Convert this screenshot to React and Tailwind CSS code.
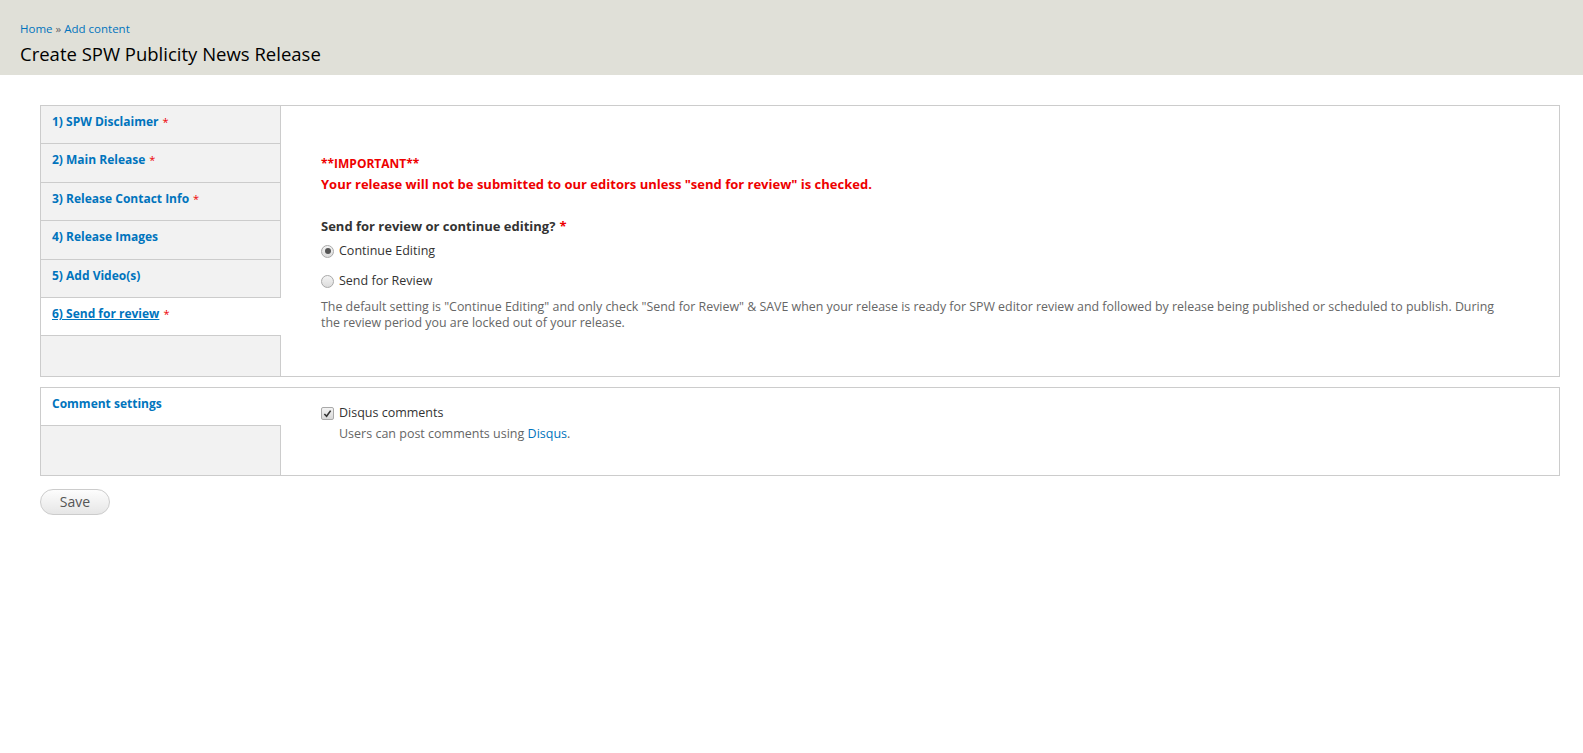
import React from "react";

const font = { fontFamily: "'Open Sans', 'Noto Sans', 'DejaVu Sans', sans-serif" };

function Star() {
  return <span className="text-[#e00] text-[11px] font-normal ml-[4px]">*</span>;
}

function Tab({ label, req, active, h }) {
  return (
    <li
      className={
        "flex items-start pl-[11px] pt-[7px] text-[12px] leading-[18px] border-b border-[#ccc] " +
        h +
        (active ? " bg-white mr-[-1px] relative z-10" : " bg-[#f2f2f2]")
      }
    >
      <a
        href="#"
        className={"font-bold text-[#0074bd] " + (active ? "underline" : "no-underline")}
      >
        {label}
      </a>
      {req && <Star />}
    </li>
  );
}

function Radio({ checked, label }) {
  return (
    <div className="flex items-center h-[18px]">
      <span className="w-[13px] h-[13px] rounded-full border border-[#a9a9a9] bg-gradient-to-b from-[#f4f4f4] to-[#dcdcdc] flex items-center justify-center">
        {checked && <span className="w-[6px] h-[6px] rounded-full bg-[#555]" />}
      </span>
      <span className="ml-[5px] text-[12.5px] text-[#333]">{label}</span>
    </div>
  );
}

export default function App() {
  return (
    <div style={font} className="bg-white min-h-[753px] text-[#333]">
      <div className="h-[75px] bg-[#e0e0d8] pl-[20px] pt-[21px]">
        <div className="text-[11.5px] leading-[16px] text-[#0074bd]">
          <a href="#">Home</a> <span className="text-[#666]">»</span> <a href="#">Add content</a>
        </div>
        <h1 className="text-[18.5px] leading-[26px] mt-[4px] text-black font-normal">
          Create SPW Publicity News Release
        </h1>
      </div>

      <div className="pl-[40px] pr-[23px] pt-[30px]">
        <div className="border border-[#ccc] flex h-[272px]">
          <ul className="w-[240px] shrink-0 border-r border-[#ccc] bg-[#f2f2f2] list-none m-0 p-0">
            <Tab h="h-[38px]" label="1) SPW Disclaimer" req />
            <Tab h="h-[39px]" label="2) Main Release" req />
            <Tab h="h-[38px]" label="3) Release Contact Info" req />
            <Tab h="h-[39px]" label="4) Release Images" />
            <Tab h="h-[38px]" label="5) Add Video(s)" />
            <Tab h="h-[38px]" label="6) Send for review" req active />
          </ul>
          <div className="flex-1 pl-[40px] pr-[30px] pt-[48px]">
            <div className="text-[12px] leading-[20px] font-bold text-[#e00]">**IMPORTANT**</div>
            <div className="text-[13px] leading-[21px] font-bold text-[#e00]">
              Your release will not be submitted to our editors unless "send for review" is checked.
            </div>
            <div className="mt-[21px] text-[13px] leading-[20px] font-bold text-[#333]">
              Send for review or continue editing?<span className="text-[#e00] ml-[4px]">*</span>
            </div>
            <div className="mt-[6px] flex flex-col gap-[12px]">
              <Radio checked label="Continue Editing" />
              <Radio label="Send for Review" />
            </div>
            <div className="mt-[9px] text-[12.4px] leading-[16px] text-[#666] max-w-[1185px]">
              The default setting is "Continue Editing" and only check "Send for Review" &amp; SAVE when your release is ready for SPW editor review and followed by release being published or scheduled to publish. During the review period you are locked out of your release.
            </div>
          </div>
        </div>

        <div className="mt-[10px] border border-[#ccc] flex h-[89px]">
          <ul className="w-[240px] shrink-0 border-r border-[#ccc] bg-[#f2f2f2] list-none m-0 p-0">
            <li className="h-[38px] bg-white mr-[-1px] relative z-10 border-b border-[#ccc] pl-[11px] pt-[7px] text-[12px] leading-[18px]">
              <a href="#" className="font-bold text-[#0074bd]">Comment settings</a>
            </li>
          </ul>
          <div className="flex-1 pl-[40px] pt-[16px]">
            <div className="flex items-center h-[18px]">
              <span className="w-[13px] h-[13px] rounded-[2px] border border-[#a9a9a9] bg-gradient-to-b from-[#f4f4f4] to-[#d8d8d8] flex items-center justify-center">
                <svg width="9" height="9" viewBox="0 0 10 10">
                  <path d="M1.5 5.5 L4 8 L8.5 1.8" fill="none" stroke="#333" strokeWidth="1.8" />
                </svg>
              </span>
              <span className="ml-[5px] text-[12.5px] text-[#333]">Disqus comments</span>
            </div>
            <div className="ml-[18px] mt-[4px] text-[12.5px] leading-[16px] text-[#666]">
              Users can post comments using <a href="#" className="text-[#0074bd]">Disqus</a>.
            </div>
          </div>
        </div>

        <button className="mt-[13px] w-[70px] h-[26px] rounded-full border border-[#ccc] bg-gradient-to-b from-[#fdfdfd] to-[#e6e6e6] text-[14px] text-[#555] leading-none">
          Save
        </button>
      </div>
    </div>
  );
}
